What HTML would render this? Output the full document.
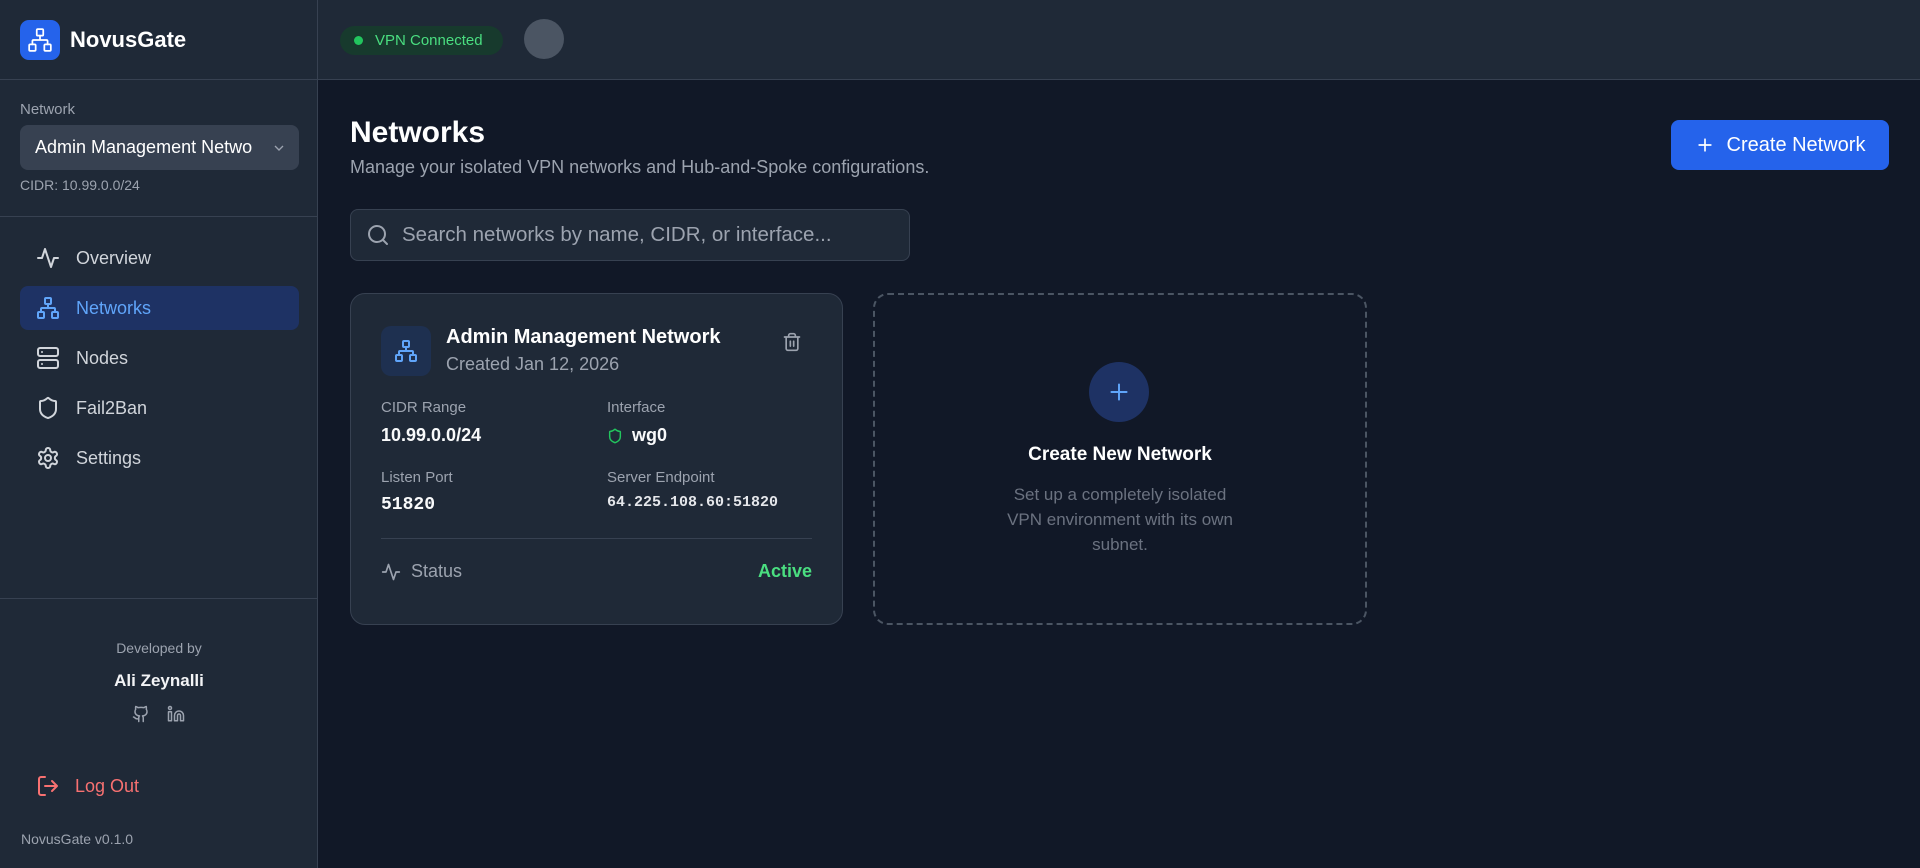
<!DOCTYPE html>
<html><head><meta charset="utf-8"><style>
*{box-sizing:border-box;margin:0;padding:0}
body{width:1920px;height:868px;background:#111827;font-family:"Liberation Sans",sans-serif;color:#f3f4f6;position:relative;overflow:hidden}
.abs{position:absolute}
.side{left:0;top:0;width:318px;height:868px;background:#1f2937;border-right:1px solid #374151}
.top{left:318px;top:0;width:1602px;height:80px;background:#1f2937;border-bottom:1px solid #374151}
svg{display:block}
.nav{position:absolute;left:20px;width:279px;height:44px;border-radius:8px;display:flex;align-items:center;padding-left:16px;font-size:18px;color:#d1d5db}
.nav span{margin-left:16px}
.lbl{font-size:15px;color:#9ca3af}
.val{font-size:18px;font-weight:bold;color:#f9fafb}
.mono{font-family:"Liberation Mono","DejaVu Sans Mono",monospace}
</style></head><body>
<div class="abs side"></div>
<div class="abs top"></div>
<div class="abs" style="left:0;top:79px;width:318px;border-top:1px solid #374151"></div>

<div class="abs" style="left:20px;top:20px;width:40px;height:40px;background:#2563eb;border-radius:9px">
<svg width="40" height="40" viewBox="0 0 24 24" fill="none" stroke="#fff" stroke-width="1.6" stroke-linecap="round" stroke-linejoin="round" style="transform:scale(.65);transform-origin:center"><rect x="16" y="16" width="6" height="6" rx="1"/><rect x="2" y="16" width="6" height="6" rx="1"/><rect x="9" y="2" width="6" height="6" rx="1"/><path d="M5 16v-3a1 1 0 0 1 1-1h12a1 1 0 0 1 1 1v3M12 12V8"/></svg></div>
<div class="abs" style="left:70px;top:27px;font-size:22px;font-weight:bold;color:#fff">NovusGate</div>

<div class="abs" style="left:340px;top:26px;width:163px;height:29px;border-radius:15px;background:#173a2d;display:flex;align-items:center;padding-left:14px;font-size:15px;color:#4ade80"><span style="width:9px;height:9px;border-radius:50%;background:#22c55e;margin-right:12px"></span>VPN Connected</div>
<div class="abs" style="left:524px;top:19px;width:40px;height:40px;border-radius:50%;background:#4b5563"></div>

<div class="abs" style="left:20px;top:101px;font-size:15px;color:#9ca3af">Network</div>
<div class="abs" style="left:20px;top:125px;width:279px;height:45px;border-radius:8px;background:#374151;padding-left:15px;display:flex;align-items:center;font-size:18px;color:#fff;overflow:hidden;white-space:nowrap">Admin Management Netwo
<svg class="abs" style="right:12px;top:15px" width="16" height="16" viewBox="0 0 24 24" fill="none" stroke="#9ca3af" stroke-width="2"><path d="m6 9 6 6 6-6"/></svg></div>
<div class="abs" style="left:20px;top:177px;font-size:14px;color:#9ca3af">CIDR: 10.99.0.0/24</div>
<div class="abs" style="left:0;top:216px;width:318px;border-top:1px solid #374151"></div>

<div class="nav" style="top:236px"><svg width="24" height="24" viewBox="0 0 24 24" fill="none" stroke="#d1d5db" stroke-width="2" stroke-linecap="round" stroke-linejoin="round"><path d="M22 12h-4l-3 9L9 3l-3 9H2"/></svg><span>Overview</span></div>
<div class="nav" style="top:286px;color:#60a5fa;background:#1e3264"><svg width="24" height="24" viewBox="0 0 24 24" fill="none" stroke="#60a5fa" stroke-width="2" stroke-linecap="round" stroke-linejoin="round"><rect x="16" y="16" width="6" height="6" rx="1"/><rect x="2" y="16" width="6" height="6" rx="1"/><rect x="9" y="2" width="6" height="6" rx="1"/><path d="M5 16v-3a1 1 0 0 1 1-1h12a1 1 0 0 1 1 1v3M12 12V8"/></svg><span>Networks</span></div>
<div class="nav" style="top:336px"><svg width="24" height="24" viewBox="0 0 24 24" fill="none" stroke="#d1d5db" stroke-width="2" stroke-linecap="round" stroke-linejoin="round"><rect x="2" y="2" width="20" height="8" rx="2"/><rect x="2" y="14" width="20" height="8" rx="2"/><path d="M6 6h.01M6 18h.01"/></svg><span>Nodes</span></div>
<div class="nav" style="top:386px"><svg width="24" height="24" viewBox="0 0 24 24" fill="none" stroke="#d1d5db" stroke-width="2" stroke-linecap="round" stroke-linejoin="round"><path d="M20 13c0 5-3.5 7.5-7.66 8.95a1 1 0 0 1-.67-.01C7.5 20.5 4 18 4 13V6a1 1 0 0 1 1-1c2 0 4.5-1.2 6.240-2.72a1.17 1.17 0 0 1 1.52 0C14.51 3.81 17 5 19 5a1 1 0 0 1 1 1z"/></svg><span>Fail2Ban</span></div>
<div class="nav" style="top:436px"><svg width="24" height="24" viewBox="0 0 24 24" fill="none" stroke="#d1d5db" stroke-width="2" stroke-linecap="round" stroke-linejoin="round"><path d="M12.22 2h-.44a2 2 0 0 0-2 2v.18a2 2 0 0 1-1 1.73l-.43.25a2 2 0 0 1-2 0l-.15-.08a2 2 0 0 0-2.73.73l-.22.38a2 2 0 0 0 .73 2.73l.15.1a2 2 0 0 1 1 1.72v.51a2 2 0 0 1-1 1.74l-.15.09a2 2 0 0 0-.73 2.73l.22.38a2 2 0 0 0 2.73.73l.15-.08a2 2 0 0 1 2 0l.43.25a2 2 0 0 1 1 1.73V20a2 2 0 0 0 2 2h.44a2 2 0 0 0 2-2v-.18a2 2 0 0 1 1-1.73l.43-.25a2 2 0 0 1 2 0l.15.08a2 2 0 0 0 2.73-.73l.22-.39a2 2 0 0 0-.73-2.73l-.15-.08a2 2 0 0 1-1-1.74v-.5a2 2 0 0 1 1-1.74l.15-.09a2 2 0 0 0 .73-2.73l-.22-.38a2 2 0 0 0-2.73-.73l-.15.08a2 2 0 0 1-2 0l-.43-.25a2 2 0 0 1-1-1.730V4a2 2 0 0 0-2-2z"/><circle cx="12" cy="12" r="3"/></svg><span>Settings</span></div>

<div class="abs" style="left:0;top:598px;width:318px;border-top:1px solid #374151"></div>
<div class="abs" style="left:0;top:640px;width:318px;text-align:center;font-size:14px;color:#9ca3af">Developed by</div>
<div class="abs" style="left:0;top:671px;width:318px;text-align:center;font-size:17px;font-weight:bold;color:#f3f4f6">Ali Zeynalli</div>
<svg class="abs" style="left:132px;top:705px" width="18" height="18" viewBox="0 0 24 24" fill="none" stroke="#9ca3af" stroke-width="2" stroke-linecap="round" stroke-linejoin="round"><path d="M15 22v-4a4.8 4.8 0 0 0-1-3.5c3 0 6-2 6-5.5.08-1.25-.27-2.48-1-3.5.28-1.15.28-2.35 0-3.5 0 0-1 0-3 1.5-2.640-.5-5.36-.5-8 0C6 2 5 2 5 2c-.3 1.15-.3 2.35 0 3.5A5.4 5.4 0 0 0 4 9c0 3.5 3 5.5 6 5.5-.39.49-.68 1.05-.85 1.65-.17.6-.22 1.23-.15 1.85v4"/><path d="M9 18c-4.51 2-5-2-7-2"/></svg>
<svg class="abs" style="left:167px;top:705px" width="18" height="18" viewBox="0 0 24 24" fill="none" stroke="#9ca3af" stroke-width="2" stroke-linecap="round" stroke-linejoin="round"><path d="M16 8a6 6 0 0 1 6 6v7h-4v-7a2 2 0 0 0-4 0v7h-4v-7a6 6 0 0 1 6-6z"/><rect x="2" y="9" width="4" height="12"/><circle cx="4" cy="4" r="2"/></svg>

<div class="abs" style="left:36px;top:774px;display:flex;align-items:center;font-size:18px;color:#f87171"><svg width="24" height="24" viewBox="0 0 24 24" fill="none" stroke="#f87171" stroke-width="2" stroke-linecap="round" stroke-linejoin="round"><path d="M9 21H5a2 2 0 0 1-2-2V5a2 2 0 0 1 2-2h4M16 17l5-5-5-5M21 12H9"/></svg><span style="margin-left:15px">Log Out</span></div>
<div class="abs" style="left:21px;top:831px;font-size:14px;color:#9ca3af">NovusGate v0.1.0</div>

<div class="abs" style="left:350px;top:116px;font-size:30px;font-weight:bold;color:#fff">Networks</div>
<div class="abs" style="left:350px;top:157px;font-size:18px;color:#9ca3af">Manage your isolated VPN networks and Hub-and-Spoke configurations.</div>
<div class="abs" style="left:1671px;top:120px;width:218px;height:50px;border-radius:8px;background:#2563eb;display:flex;align-items:center;justify-content:center;font-size:20px;color:#fff"><svg width="20" height="20" viewBox="0 0 24 24" fill="none" stroke="#fff" stroke-width="2" stroke-linecap="round"><path d="M5 12h14M12 5v14"/></svg><span style="margin-left:12px">Create Network</span></div>

<div class="abs" style="left:350px;top:209px;width:560px;height:52px;border-radius:8px;background:#1f2937;border:1px solid #374151;display:flex;align-items:center;padding-left:15px;font-size:20.5px;color:#9ca3af"><svg width="24" height="24" viewBox="0 0 24 24" fill="none" stroke="#9ca3af" stroke-width="2" stroke-linecap="round"><circle cx="11" cy="11" r="8"/><path d="m21 21-4.3-4.3"/></svg><span style="margin-left:12px">Search networks by name, CIDR, or interface...</span></div>

<div class="abs" style="left:350px;top:293px;width:493px;height:332px;border-radius:15px;background:#1f2937;border:1px solid #374151"></div>
<div class="abs" style="left:381px;top:326px;width:50px;height:50px;border-radius:10px;background:#1e3050;display:flex;align-items:center;justify-content:center"><svg width="24" height="24" viewBox="0 0 24 24" fill="none" stroke="#60a5fa" stroke-width="2" stroke-linecap="round" stroke-linejoin="round"><rect x="16" y="16" width="6" height="6" rx="1"/><rect x="2" y="16" width="6" height="6" rx="1"/><rect x="9" y="2" width="6" height="6" rx="1"/><path d="M5 16v-3a1 1 0 0 1 1-1h12a1 1 0 0 1 1 1v3M12 12V8"/></svg></div>
<div class="abs" style="left:446px;top:326px;font-size:20px;font-weight:bold;color:#fff">Admin Management Network</div>
<div class="abs" style="left:446px;top:354px;font-size:18px;color:#9ca3af">Created Jan 12, 2026</div>
<svg class="abs" style="left:782px;top:332px" width="20" height="20" viewBox="0 0 24 24" fill="none" stroke="#9ca3af" stroke-width="2" stroke-linecap="round"><path d="M3 6h18M19 6v14c0 1-1 2-2 2H7c-1 0-2-1-2-2V6M8 6V4c0-1 1-2 2-2h4c1 0 2 1 2 2v2M10 11v6M14 11v6"/></svg>
<div class="abs lbl" style="left:381px;top:399px">CIDR Range</div>
<div class="abs val" style="left:381px;top:425px">10.99.0.0/24</div>
<div class="abs lbl" style="left:607px;top:399px">Interface</div>
<div class="abs val" style="left:607px;top:425px;display:flex;align-items:center"><svg width="16" height="16" viewBox="0 0 24 24" fill="none" stroke="#22c55e" stroke-width="2.2"><path d="M20 13c0 5-3.5 7.5-7.66 8.95a1 1 0 0 1-.67-.01C7.5 20.5 4 18 4 13V6a1 1 0 0 1 1-1c2 0 4.5-1.2 6.24-2.72a1.17 1.17 0 0 1 1.52 0C14.51 3.81 17 5 19 5a1 1 0 0 1 1 1z"/></svg><span style="margin-left:9px">wg0</span></div>
<div class="abs lbl" style="left:381px;top:469px">Listen Port</div>
<div class="abs val mono" style="left:381px;top:495px;font-size:18px">51820</div>
<div class="abs lbl" style="left:607px;top:469px">Server Endpoint</div>
<div class="abs mono" style="left:607px;top:494px;font-size:15px;font-weight:bold;color:#e5e7eb">64.225.108.60:51820</div>
<div class="abs" style="left:381px;top:538px;width:431px;border-top:1px solid #374151"></div>
<div class="abs" style="left:381px;top:561px;display:flex;align-items:center;font-size:18px;color:#9ca3af"><svg width="20" height="20" viewBox="0 0 24 24" fill="none" stroke="#9ca3af" stroke-width="2" stroke-linecap="round" stroke-linejoin="round"><path d="M22 12h-4l-3 9L9 3l-3 9H2"/></svg><span style="margin-left:10px">Status</span></div>
<div class="abs" style="left:700px;width:112px;text-align:right;top:561px;font-size:18px;font-weight:bold;color:#4ade80">Active</div>

<div class="abs" style="left:873px;top:293px;width:494px;height:332px;border-radius:15px;border:2px dashed #4b5563"></div>
<div class="abs" style="left:1089px;top:362px;width:60px;height:60px;border-radius:50%;background:#1e3264;display:flex;align-items:center;justify-content:center"><svg width="26" height="26" viewBox="0 0 24 24" fill="none" stroke="#60a5fa" stroke-width="1.8" stroke-linecap="round"><path d="M5 12h14M12 5v14"/></svg></div>
<div class="abs" style="left:873px;top:444px;width:494px;text-align:center;font-size:19px;font-weight:bold;color:#fff">Create New Network</div>
<div class="abs" style="left:995px;top:482px;width:250px;text-align:center;font-size:17px;line-height:25px;color:#6b7280">Set up a completely isolated VPN environment with its own subnet.</div>
</body></html>
